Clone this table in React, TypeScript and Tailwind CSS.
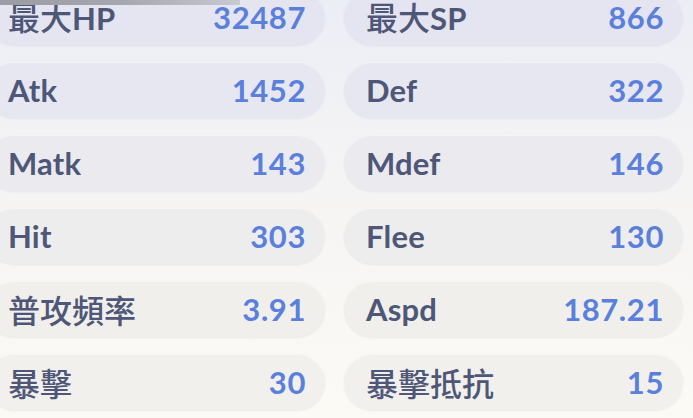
import React from "react";

const rows: [string, string, string, string, string][] = [
  ["最大HP", "32487", "最大SP", "866", "bg-[#e4e5f0]"],
  ["Atk", "1452", "Def", "322", "bg-[#e6e7f0]"],
  ["Matk", "143", "Mdef", "146", "bg-[#eaeaef]"],
  ["Hit", "303", "Flee", "130", "bg-[#eeedee]"],
  ["普攻頻率", "3.91", "Aspd", "187.21", "bg-[#f1efec]"],
  ["暴擊", "30", "暴擊抵抗", "15", "bg-[#f2f0ed]"],
];

function Label({ text }: { text: string }) {
  const parts = text.match(/[\u3000-\u9fff]+|[^\u3000-\u9fff]+/g) || [];
  return (
    <span className="leading-none text-[#4e5777] flex items-baseline">
      {parts.map((p, i) =>
        /[\u3000-\u9fff]/.test(p) ? (
          <span key={i} className="text-[32px] font-medium" style={{ fontFamily: '"Noto Sans CJK TC", sans-serif' }}>
            {p}
          </span>
        ) : (
          <span key={i} className="text-[31px] font-bold tracking-[0.2px]">
            {p}
          </span>
        )
      )}
    </span>
  );
}

function Pill({ label, value, bg }: { label: string; value: string; bg: string }) {
  return (
    <div
      className={`h-[56px] rounded-full ${bg} flex items-center justify-between pl-[22px] pr-[19px] shadow-[0_1px_2px_rgba(120,120,150,0.12),inset_0_1px_0_rgba(255,255,255,0.5)]`}
    >
      <Label text={label} />
      <span className="text-[31px] font-bold text-[#5a80dc] leading-none tracking-[0.6px]">{value}</span>
    </div>
  );
}

export default function App() {
  return (
    <div
      className="relative w-[693px] h-[418px] overflow-hidden bg-gradient-to-b from-[#eceef6] via-[#f6f5f4] to-[#fcfaf5]"
      style={{ fontFamily: '"Lato", "Noto Sans CJK TC", sans-serif' }}
    >
      <div className="grid grid-cols-[339px_339px] gap-x-[19px] gap-y-[17px] ml-[-14px] mt-[-11px]">
        {rows.map(([l1, v1, l2, v2, bg]) => (
          <React.Fragment key={l1}>
            <Pill label={l1} value={v1} bg={bg} />
            <Pill label={l2} value={v2} bg={bg} />
          </React.Fragment>
        ))}
      </div>
      <div className="absolute left-0 top-0 h-[5px] w-[240px] bg-gradient-to-r from-[#9c9ca4] via-[#a6a6ae] to-[#c8c9d2]" />
    </div>
  );
}
